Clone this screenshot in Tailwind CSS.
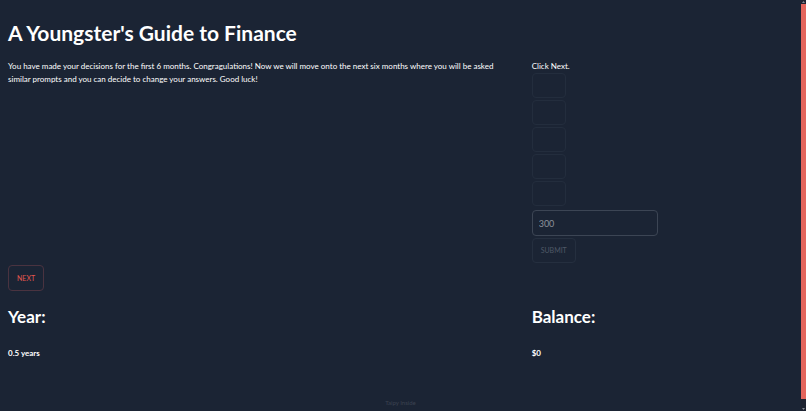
<!DOCTYPE html>
<html lang="en">
<head>
    <meta charset="UTF-8">
    <meta name="viewport" content="width=device-width, initial-scale=1.0">
    <title>A Youngster's Guide to Finance</title>
    <script src="https://cdn.jsdelivr.net/npm/@tailwindcss/browser@4"></script>
</head>
<body class="flex min-h-screen bg-[#1b2434] font-['Lato',sans-serif] text-[8px] leading-[13px] text-white overflow-hidden">

<main class="flex flex-1 flex-col px-2 pt-4">
    <h1 class="text-[21px] leading-[34px] font-bold">A Youngster's Guide to Finance</h1>

    <section class="mt-2.5 grid grid-cols-[2fr_1fr] gap-x-px">
        <p class="pr-4">You have made your decisions for the first 6 months. Congragulations! Now we will move onto the next six months where you will be asked similar prompts and you can decide to change your answers. Good luck!</p>

        <div class="flex flex-col items-start">
            <p>Click Next.</p>
            <div class="flex flex-col gap-0.5">
                <button type="button" disabled aria-label="Option 1" class="h-[25px] w-[34px] rounded border border-[#232d3d]"></button>
                <button type="button" disabled aria-label="Option 2" class="h-[25px] w-[34px] rounded border border-[#232d3d]"></button>
                <button type="button" disabled aria-label="Option 3" class="h-[25px] w-[34px] rounded border border-[#232d3d]"></button>
                <button type="button" disabled aria-label="Option 4" class="h-[25px] w-[34px] rounded border border-[#232d3d]"></button>
                <button type="button" disabled aria-label="Option 5" class="h-[25px] w-[34px] rounded border border-[#232d3d]"></button>
            </div>
            <input type="text" value="300" disabled aria-label="Amount" class="mt-1 h-[26px] w-[126px] rounded border border-[#3c4554] px-1.5 text-[9px] text-[#8b919b]">
            <button type="button" disabled class="mt-0.5 h-[25px] rounded border border-[#252f3f] px-2 text-[7px] text-[#4f5866]">SUBMIT</button>
        </div>
    </section>

    <button type="button" class="mt-0.5 h-[26px] self-start rounded border border-[#4a3340] px-2 text-[7px] text-[#e3574f]">NEXT</button>

    <section class="mt-3 grid grid-cols-[2fr_1fr] gap-x-px">
        <div>
            <h2 class="text-[17px] leading-7 font-bold">Year:</h2>
            <p class="mt-4 font-bold">0.5 years</p>
        </div>
        <div>
            <h2 class="text-[17px] leading-7 font-bold">Balance:</h2>
            <p class="mt-4 font-bold">$0</p>
        </div>
    </section>

    <footer class="mt-auto pb-0.5 text-center text-[6px] leading-3">
        <a href="#" class="text-[#3b4351]">Taipy Inside</a>
    </footer>
</main>

<!-- scroll rail -->
<aside class="flex w-[5px] flex-col items-center justify-between bg-[#1d2230]">
    <svg class="h-1 w-full" viewBox="0 0 5 4"><path d="M1 3l1.500-2L4 3z" fill="#858890"/></svg>
    <div class="mb-2 w-full flex-1 bg-[#e3655c]"></div>
    <svg class="h-1 w-full" viewBox="0 0 5 4"><path d="M1 1l1.500 2L4 1z" fill="#858890"/></svg>
</aside>

</body>
</html>
